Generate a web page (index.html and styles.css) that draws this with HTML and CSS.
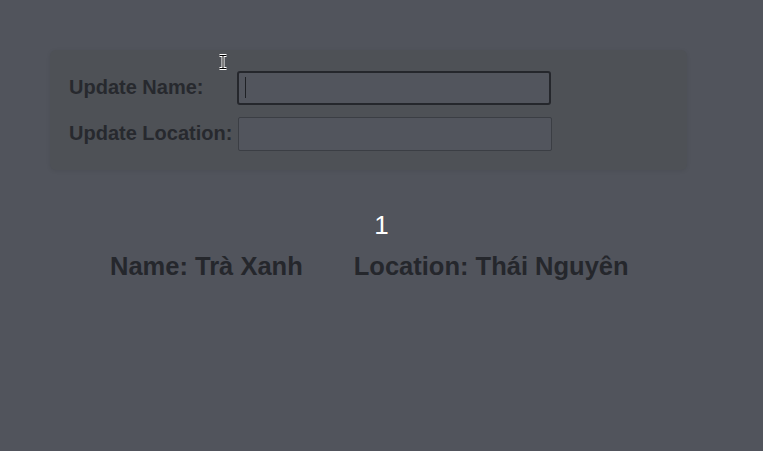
FILE: index.html
```html
<!DOCTYPE html>
<html lang="en">
<head>
  <meta charset="UTF-8">
  <meta name="viewport" content="width=device-width, initial-scale=1.0">
  <title>Profile</title>
  <link rel="stylesheet" href="styles.css">
</head>
<body>

  <!-- Form cap nhat -->
  <div class="card">
    <label for="name">Update Name:</label>
    <div class="field">
      <input type="text" id="name" class="focused">
      <span class="caret"></span>
    </div>
    <label for="location">Update Location:</label>
    <div class="field">
      <input type="text" id="location">
    </div>
  </div>

  <!-- Ket qua -->
  <div class="count">1</div>
  <div class="info">
    <h2>Name: Trà Xanh</h2>
    <h2>Location: Thái Nguyên</h2>
  </div>

  <svg class="ibeam" width="10" height="16" viewBox="0 0 10 16">
    <path d="M1.5 1.5h7M1.5 14.5h7M5 1.5v13" stroke="#fff" stroke-width="3" fill="none"/>
    <path d="M1.5 1.5h7M1.5 14.5h7M5 1.5v13" stroke="#000" stroke-width="1" fill="none"/>
  </svg>

</body>
</html>
```

FILE: styles.css
```css
* {
  margin: 0;
  padding: 0;
  box-sizing: border-box;
}

body {
  font-family: 'Liberation Sans', Arial, sans-serif;
  background-color: #51545c;
  color: #26282d;
  height: 100vh;
  padding-top: 50px;
  position: relative;
}

.card {
  width: 637px;
  margin-left: 50px;
  padding: 21px 19px 19px;
  background-color: #4e5156;
  border-radius: 6px;
  box-shadow: 0 1px 4px rgba(0, 0, 0, 0.08);
  display: grid;
  grid-template-columns: max-content 314px;
  justify-content: start;
  column-gap: 6px;
  row-gap: 12px;
  align-items: center;
}

label {
  font-size: 20px;
  font-weight: bold;
  color: #27292e;
  margin-top: -2px;
}

.field {
  position: relative;
}

input[type="text"] {
  display: block;
  width: 100%;
  height: 34px;
  background-color: #52555d;
  border: 1px solid #3b3e44;
  border-radius: 2px;
  outline: none;
}

input.focused {
  border: 2px solid #25272c;
  border-radius: 3px;
  margin-left: -1px;
}

.caret {
  position: absolute;
  left: 7px;
  top: 6px;
  width: 1px;
  height: 21px;
  background-color: #1f2125;
}

.count {
  margin-top: 40px;
  text-align: center;
  color: #fff;
  font-size: 26px;
  line-height: 30px;
}

.info {
  display: flex;
  gap: 51px;
  margin-top: 12px;
  padding-left: 110px;
}

.info h2 {
  font-size: 25.5px;
  line-height: 29px;
  font-weight: bold;
  color: #25272c;
}

.ibeam {
  position: absolute;
  left: 218px;
  top: 54px;
}
```
